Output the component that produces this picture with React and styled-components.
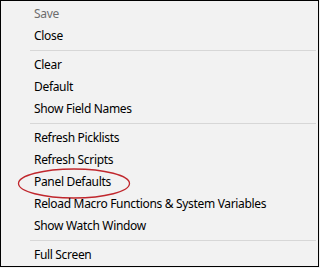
import React from "react";
import styled, { createGlobalStyle } from "styled-components";

const Global = createGlobalStyle`
  html, body { margin: 0; padding: 0; background: #f2f2f2; }
  body { font-family: "Noto Sans", "Segoe UI", sans-serif; }
`;

const Menu = styled.div`
  box-sizing: border-box;
  width: 319px;
  height: 267px;
  border: 1px solid #000;
  background: #f2f2f2;
  padding-top: 2px;
  display: flex;
  flex-direction: column;
`;

const Item = styled.div`
  position: relative;
  height: 22px;
  flex: 0 0 22px;
  display: flex;
  align-items: center;
  padding-left: 33px;
  font-size: 12px;
  letter-spacing: -0.32px;
  line-height: 1;
  padding-bottom: 1px;
  box-sizing: border-box;
  color: ${(p) => (p.$disabled ? "#6d6d6d" : "#000")};
  white-space: nowrap;
`;

const Separator = styled.div`
  flex: 0 0 7px;
  display: flex;
  align-items: center;
  padding-left: 29px;
  padding-right: 2px;
  &::after {
    content: "";
    flex: 1;
    height: 1px;
    background: #d7d7d7;
  }
`;

const Highlight = styled.svg`
  position: absolute;
  left: 16px;
  top: -3px;
  width: 114px;
  height: 31px;
  overflow: visible;
  pointer-events: none;
`;

const groups = [
  [{ label: "Save", disabled: true }, { label: "Close" }],
  [{ label: "Clear" }, { label: "Default" }, { label: "Show Field Names" }],
  [
    { label: "Refresh Picklists" },
    { label: "Refresh Scripts" },
    { label: "Panel Defaults", circled: true },
    { label: "Reload Macro Functions & System Variables" },
    { label: "Show Watch Window" },
  ],
  [{ label: "Full Screen" }],
];

export default function App() {
  return (
    <>
      <Global />
      <Menu>
        {groups.map((g, gi) => (
          <React.Fragment key={gi}>
            {gi > 0 && <Separator />}
            {g.map((it) => (
              <Item key={it.label} $disabled={it.disabled}>
                {it.label}
                {it.circled && (
                  <Highlight viewBox="0 0 114 31">
                    <ellipse
                      cx="57"
                      cy="15.5"
                      rx="55.5"
                      ry="14.5"
                      fill="none"
                      stroke="#c0272d"
                      strokeWidth="1.3"
                    />
                  </Highlight>
                )}
              </Item>
            ))}
          </React.Fragment>
        ))}
      </Menu>
    </>
  );
}
